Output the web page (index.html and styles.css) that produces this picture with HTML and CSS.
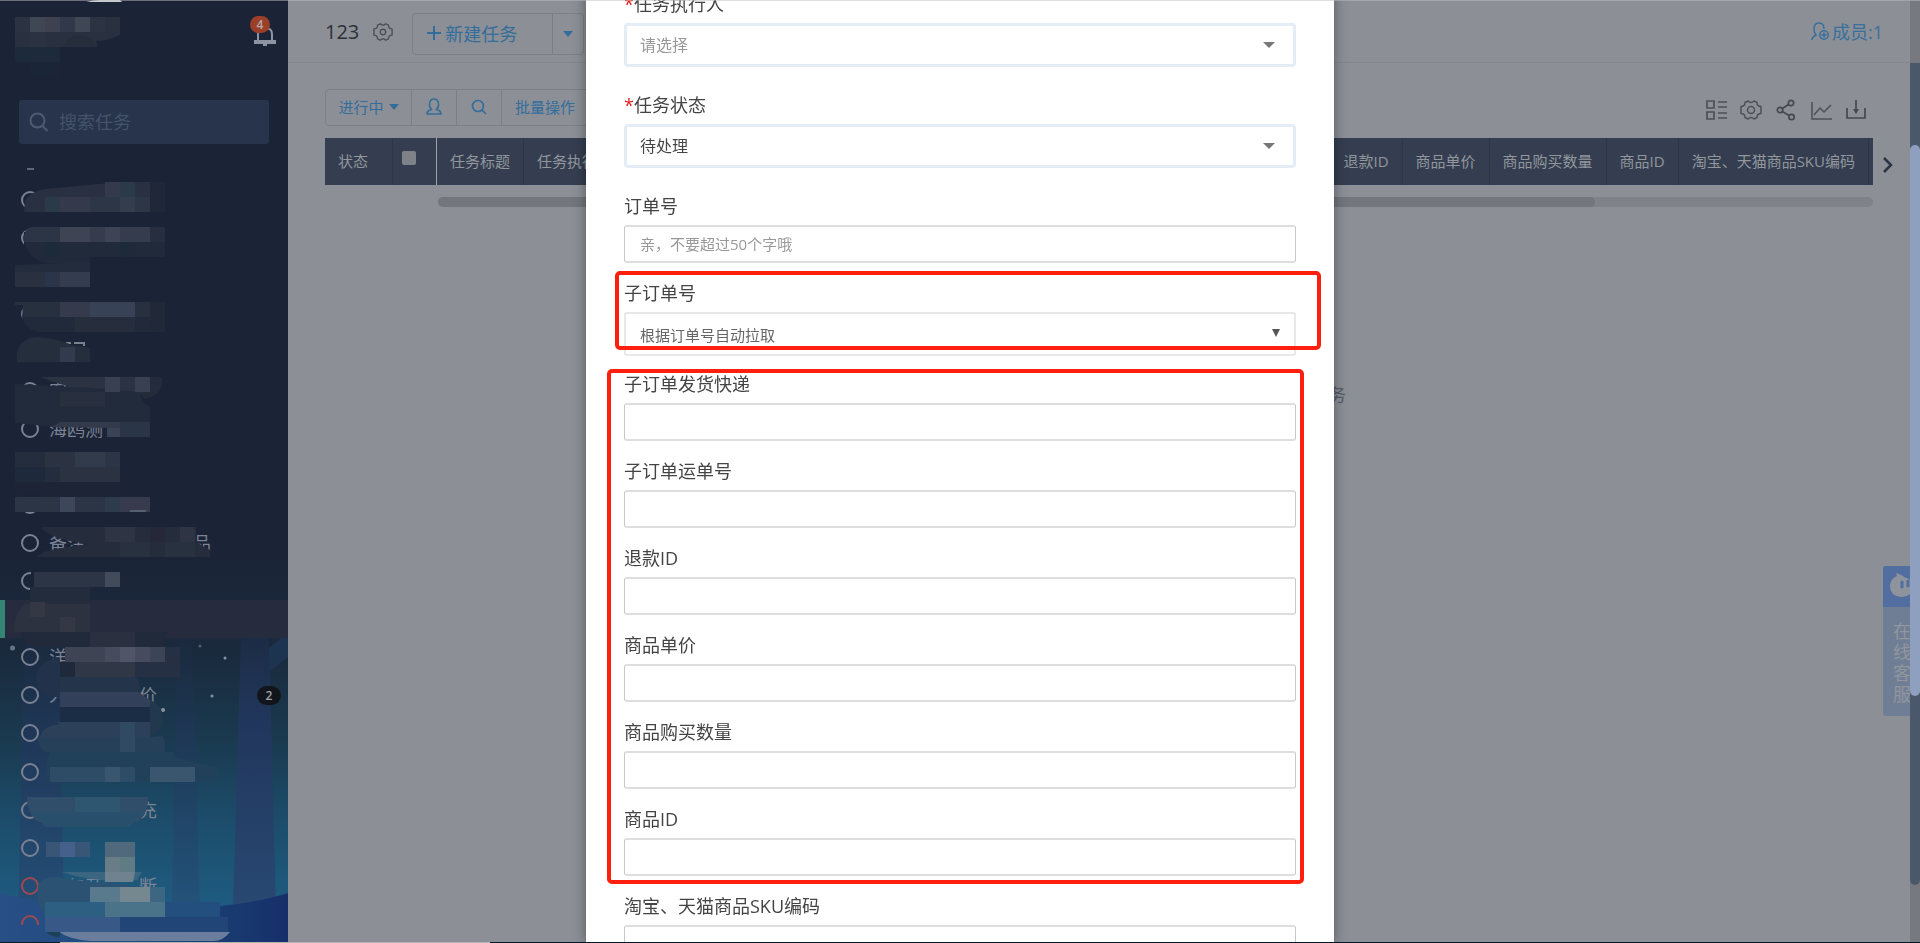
FILE: index.html
```html
<!DOCTYPE html>
<html lang="zh-CN">
  <head>
    <meta charset="UTF-8" />
    <meta name="viewport" content="width=device-width, initial-scale=1.0" />
    <title>任务列表</title>
    <link rel="stylesheet" href="styles.css">
  </head>
  <body>
    <aside class="sidebar">
      <svg class="sidebar-bg" viewBox="0 0 288 403" preserveAspectRatio="none" aria-hidden="true">
        <defs>
          <linearGradient id="sky" x1="0" y1="0" x2="0" y2="1">
            <stop offset="0" stop-color="#1b2336" />
            <stop offset="0.28" stop-color="#1a2a3d" />
            <stop offset="0.5" stop-color="#1a3a50" />
            <stop offset="0.7" stop-color="#1c4d6b" />
            <stop offset="0.9" stop-color="#1e5b80" />
          </linearGradient>
          <linearGradient id="tree" x1="0" y1="0" x2="0" y2="1">
            <stop offset="0" stop-color="#1c2b45" stop-opacity="0.3" />
            <stop offset="0.35" stop-color="#21355a" />
            <stop offset="1" stop-color="#284973" />
          </linearGradient>
          <linearGradient id="hill" x1="0" y1="0" x2="1" y2="0">
            <stop offset="0" stop-color="#284f86" />
            <stop offset="0.5" stop-color="#1d4a7c" />
            <stop offset="1" stop-color="#162f6a" />
          </linearGradient>
        </defs>
        <rect width="288" height="403" fill="url(#sky)" />
        <path fill="url(#tree)" d="M242 60h26l8 310h-43z" />
        <path fill="url(#tree)" opacity="0.5" d="M177 90h15l8 280h-28z" />
        <path fill="url(#tree)" opacity="0.7" d="M25 90h34l5 280H18z" />
        <path fill="#1c3450" d="M269 108l19-16v25l-19 15z" />
        <path fill="url(#hill)" d="M0 353q60 14 110 22t110-9q40-4 68-13v50H0z" />
        <g fill="#8a95a3">
          <circle cx="12.500" cy="108" r="2.500" opacity="0.7" />
          <circle cx="200" cy="106" r="1.500" opacity="0.5" />
          <circle cx="225" cy="118" r="1.500" />
          <circle cx="212" cy="156" r="1.500" />
          <circle cx="163" cy="170" r="2" />
        </g>
      </svg>

      <div class="sidebar-head">
        <button class="bell" aria-label="通知">
          <svg width="22" height="20" viewBox="0 0 22 20" fill="none" stroke="#8c93a1" stroke-width="2">
            <path d="M4 15V8q0-6 7-6t7 6v7" />
            <path d="M1 15h20v2H1zM9 19h4" />
          </svg>
          <span class="bell-count">4</span>
        </button>
      </div>

      <label class="search">
        <svg width="20" height="20" viewBox="0 0 20 20" fill="none" stroke="#4d5b72" stroke-width="2">
          <circle cx="8.500" cy="8.500" r="7" />
          <path d="M13.500 14l5 5" />
        </svg>
        <input type="text" placeholder="搜索任务" aria-label="搜索任务" />
      </label>

      <ul class="projects">
        <li><i class="dot"></i></li>
        <li><i class="dot"></i></li>
        <li></li>
        <li><i class="dot"></i></li>
        <li></li>
        <li><i class="dot"></i>客服</li>
        <li><i class="dot"></i>海鸥测</li>
        <li></li>
        <li><i class="dot"></i></li>
        <li><i class="dot"></i>备注　　　　　　品</li>
        <li><i class="dot"></i></li>
        <li class="active"></li>
        <li><i class="dot"></i>洋</li>
        <li><i class="dot"></i>人　　　　价<span class="count">2</span></li>
        <li><i class="dot"></i></li>
        <li><i class="dot"></i></li>
        <li><i class="dot"></i>　　　　　充</li>
        <li><i class="dot"></i></li>
        <li><i class="dot late"></i>　与开　　断</li>
        <li><i class="dot late"></i></li>
      </ul>

      <!-- censored names -->
      <svg class="mosaic" width="288" height="943" viewBox="0 0 288 943" aria-hidden="true">
        <path fill="#c9ccd0" d="M86 2q8-2 14-2h20l2 2z" />
        <g fill="none" stroke-width="15">
          <path stroke="#2b3242" d="M15 24.500h15M30 39.500h15" />
          <path stroke="#404754" d="M30 24.500h15M75 24.500h15" />
          <path stroke="#3e4150" d="M45 24.500h15" />
          <path stroke="#31384a" d="M60 24.500h15" />
          <path stroke="#2b3443" d="M90 24.500h15" />
          <path stroke="#29303f" d="M105 24.500h15M15 39.500h15M45 39.500h20" />
          <path stroke="#1c2a3b" d="M15 54.500h45" />
          <path stroke="#1b2538" d="M30 69.500h30" />
        </g>
        <path fill="#29303f" d="M60 32h60v3q-12 6-24 6l2 6H60z" />
        <path fill="#262d3b" d="M63 47q4-11 16-12 13 1 19 12z" />
        <path fill="#5d6675" d="M27 168h7v2h-7z" />

        <path fill="#1b2336" d="M25 196l12-4v20H25z" />
        <path fill="#283041" d="M25 201q6-10 20-12l75-7h30v30H24z" />
        <path fill="#1f2739" d="M150 182h15v30h-15z" />
        <g fill="none" stroke-width="15">
          <path stroke="#2b3a49" d="M45 204.500h15M120 189.500h15" />
          <path stroke="#343a4b" d="M60 204.500h30M105 189.500h15" />
          <path stroke="#2c3647" d="M90 204.500h30M135 204.500h15" />
          <path stroke="#323d4e" d="M120 204.500h15" />
        </g>
        <path fill="#1b2336" d="M24 232h20v25H24z" />
        <path fill="#202a3b" d="M24 242h141v15H90v6H45q-16-3-21-21z" />
        <path fill="#2b3545" d="M24 242q-1-14 8-15h28v15z" />
        <g fill="none" stroke-width="15">
          <path stroke="#3e4454" d="M60 234.500h30M105 234.500h15" />
          <path stroke="#343c4e" d="M90 234.500h15M120 234.500h30" />
          <path stroke="#272e3f" d="M150 234.500h15" />
          <path stroke="#1d2a3a" d="M45 249.500h15M120 249.500h15" />
          <path stroke="#29303f" d="M15 279.500h30" />
          <path stroke="#2a3549" d="M45 279.500h15" />
          <path stroke="#343d4f" d="M60 279.500h30" />
        </g>
        <path fill="#232c3c" d="M15 265l75-3v10H15z" />

        <path fill="#1b2336" d="M23 302h20v24H23z" />
        <path fill="#27303f" d="M15 302h135v15H22l1-12h-8z" />
        <path fill="#202a3a" d="M22 317h128v15H40q-15-2-18-15z" />
        <g fill="none" stroke-width="15">
          <path stroke="#353b4c" d="M60 309.500h30" />
          <path stroke="#384256" d="M90 309.500h45" />
          <path stroke="#262d3d" d="M75 324.500h60" />
          <path stroke="#212939" d="M150 309.500h15M150 324.500h15" />
        </g>
        <path fill="#7a818e" d="M66 342h5v2h-5zM74 342h11v4h-2v-2h-9z" />
        <path fill="#252e3d" d="M17 362v-8q3-17 22-17 20 2 33 8l18 3v14z" />
        <path stroke="#313b4d" stroke-width="15" d="M60 354.500h15" />

        <path fill="#1b2336" d="M51 389h110v13H21v-16h30z" />
        <path fill="#2b3242" d="M40 377h110v15H90q-26-6-50-15z" />
        <path fill="#242b3b" d="M150 377h12q2 18-17 22l-6-7h11z" />
        <path fill="#222b3b" d="M15 384l75 4 50 4q2 12 10 15v15H105l-50 5-40-4z" />
        <g fill="none" stroke-width="15">
          <path stroke="#384051" d="M105 384.500h15M135 384.500h15" />
          <path stroke="#28303f" d="M60 399.500h45" />
          <path stroke="#3a4355" d="M107 429.500h13" />
          <path stroke="#2a3548" d="M120 429.500h30" />
        </g>
        <path fill="#323a4b" d="M52 427l8-5h60v6z" />

        <g fill="none" stroke-width="15">
          <path stroke="#242d3d" d="M15 459.500h30M45 474.500h15" />
          <path stroke="#2b3343" d="M45 459.500h30M60 474.500h60" />
          <path stroke="#323b4c" d="M75 459.500h30" />
          <path stroke="#2c3545" d="M105 459.500h15" />
          <path stroke="#1e293b" d="M15 474.500h30" />
          <path stroke="#1d2435" d="M15 489.500h105" />
        </g>
        <path fill="#1b2336" d="M20 493h20v18H20z" />
        <g fill="none" stroke-width="15">
          <path stroke="#2b3545" d="M15 504.500h45M75 504.500h30" />
          <path stroke="#3d475a" d="M60 504.500h15" />
          <path stroke="#2d3c4c" d="M105 504.500h15" />
          <path stroke="#383b4d" d="M120 504.500h30" />
        </g>
        <path fill="#555f6e" d="M130 510h16v2h-16z" />

        <path fill="#252d3d" d="M41 527h155v15l14 8v7H36q6-8 54-13-40-4-49-17z" />
        <g fill="none" stroke-width="15">
          <path stroke="#2f3445" d="M105 534.500h30M180 534.500h15" />
          <path stroke="#28313f" d="M120 549.500h30M165 549.500h30" />
          <path stroke="#262738" d="M150 534.500h15" />
        </g>
        <path fill="#1b2336" d="M31 571h8v22h-8z" />
        <path fill="#222c3c" d="M30 587h60v15H30z" />
        <path fill="#2c3545" d="M34 572h71v15H34z" />
        <path stroke="#424b59" stroke-width="15" d="M105 579.500h15" />
        <path fill="#2d3241" d="M14 632q0-20 12-28h64v28z" />
        <path fill="#343744" d="M30 602h15v15H30zM60 617h15v15H60z" />

        <path fill="#212a3a" d="M20 632h148l-6 15H32q-8-4-12-15z" />
        <path fill="#2a303f" d="M90 632h45v15H90z" />
        <g fill="none" stroke-width="15">
          <path stroke="#3f4455" d="M65 654.500h40" />
          <path stroke="#464c5e" d="M105 654.500h15M135 654.500h15" />
          <path stroke="#505667" d="M120 654.500h15" />
          <path stroke="#3c4457" d="M150 654.500h15" />
          <path stroke="#263044" d="M165 654.500h15M135 669.500h45" />
          <path stroke="#303746" d="M75 669.500h60" />
          <path stroke="#1f293c" d="M60 669.500h15" />
        </g>
        <path fill="#22324a" d="M36 677q2-17 24-19v39H48q-12-6-12-20z" />
        <path fill="#24344a" d="M60 677h75q6 4 5 15H60z" />
        <path fill="#32405a" d="M60 692h78l12 8v7H60z" />
        <path fill="#1b2d44" d="M60 707h90v15H60z" />
        <path fill="#22384c" d="M150 700q13 5 13 20-2 13-13 17z" />
        <path fill="#2c4059" d="M40 737q4-12 20-13l-3-2h93v15z" />
        <path fill="#254058" d="M38 737h112l12-1q4 2 3 16H45q-8-6-7-15z" />
        <path fill="#2f4a62" d="M120 722h15v30h-15z" />
        <path fill="#21405a" d="M50 752h123l2 6 42 9v15h-22H53q-12-10-3-30z" />
        <g fill="none" stroke-width="15">
          <path stroke="#2f4c67" d="M50 774.500h55M120 774.500h15" />
          <path stroke="#3a566f" d="M105 774.500h15M150 774.500h45" />
        </g>
        <path fill="#304d69" d="M27 797h121q1 15-10 25H38q-12-10-11-25z" />
        <path fill="#2f5671" d="M75 797h45v15H75z" />
        <path fill="#28506d" d="M32 812h110l-12 15H45z" />
        <g fill="none" stroke-width="15">
          <path stroke="#3a5676" d="M46 849.500h14M75 849.500h15" />
          <path stroke="#45608a" d="M60 849.500h15" />
          <path stroke="#50697c" d="M105 849.500h30" />
          <path stroke="#6a7d86" d="M105 864.500h15" />
          <path stroke="#5f7b84" d="M120 864.500h15" />
        </g>
        <path fill="#3b6580" d="M62 872h80l-5 8q-18 4-35 0-24-2-40-8z" />
        <path fill="#708290" d="M105 872h30l-2 10h-28z" />
        <path fill="#2b5273" d="M38 902V886q4-9 17-9 40 6 110 12v28H45z" />
        <g fill="none" stroke-width="15">
          <path stroke="#587a8c" d="M90 894.500h30" />
          <path stroke="#76888f" d="M120 894.500h30" />
          <path stroke="#3d6683" d="M150 894.500h15" />
          <path stroke="#2d5f82" d="M45 909.500h60" />
          <path stroke="#4a7288" d="M105 909.500h60" />
          <path stroke="#234f7e" d="M165 909.500h55" />
          <path stroke="#385988" d="M45 924.500h75" />
          <path stroke="#224578" d="M120 924.500h108" />
        </g>
        <path fill="#274e84" d="M20 925h24v11H20z" />
        <path fill="#6a7d9d" d="M60 932h170q-7 9-16 9H90q-22-2-30-9z" />
        <path fill="#1c4058" d="M46 932h14v5q-8 0-14-5z" />
      </svg>
    </aside>

    <main class="main">
      <header class="topbar">
        <h1>123</h1>
        <button class="icon-btn gear" aria-label="设置">
          <svg width="20" height="20" viewBox="0 0 22 22" fill="none" stroke="#4c5057" stroke-width="1.500" stroke-linejoin="round">
            <path d="M8 2q3 3 6 0l3 1.500q0 4 4 4v7q-4 0-4 4L14 20q-3-3-6 0l-3-1.500q0-4-4-4v-7q4 0 4-4z" />
            <circle cx="11" cy="11" r="3" />
          </svg>
        </button>
        <div class="btn-group create">
          <button class="btn-new">
            <svg width="14" height="14" viewBox="0 0 14 14" stroke="#336d9b" stroke-width="2"><path d="M7 0v14M0 7h14" /></svg>
            新建任务
          </button>
          <button class="btn-more" aria-label="更多"><i class="caret"></i></button>
        </div>
        <a class="members" href="#">
          <svg width="18" height="19" viewBox="0 0 18 19" fill="none" stroke="#36709d" stroke-width="1.500">
            <path d="M1 18q0-3 4-5-2-2-2-6 0-6 5-6t5 6" />
            <circle cx="13" cy="13" r="4.200" />
            <path d="M13 10.500v5M10.500 13h5" />
          </svg>
          成员:1
        </a>
      </header>

      <section class="content">
        <div class="toolbar">
          <div class="btn-group">
            <button class="filter-status">进行中<i class="caret"></i></button>
            <button class="filter-icon" aria-label="成员">
              <svg width="16" height="18" viewBox="0 0 16 18" fill="none" stroke="#336d9b" stroke-width="1.500">
                <path d="M5.500 11.500Q3 9 3.500 5.500 4 1 8 1t4.500 4.500q.5 3.500-2 6 4 1 4.500 3.500v1H1v-1q.5-2.500 4.500-3.500z" />
              </svg>
            </button>
            <button class="filter-icon" aria-label="搜索">
              <svg width="16" height="16" viewBox="0 0 16 16" fill="none" stroke="#336d9b" stroke-width="1.700">
                <circle cx="7" cy="7" r="5.500" />
                <path d="M11 11l4 4" />
              </svg>
            </button>
            <button class="filter-batch">批量操作</button>
          </div>
          <div class="tools">
            <button class="icon-btn" aria-label="列表">
              <svg width="22" height="22" viewBox="0 0 22 22" fill="none" stroke="#4c5057" stroke-width="1.700">
                <path d="M2 2h7v7H2zM2 13h7v7H2zM13 3h9M13 8h9M13 14h9M13 19h9" />
              </svg>
            </button>
            <button class="icon-btn" aria-label="设置">
              <svg width="22" height="22" viewBox="0 0 22 22" fill="none" stroke="#4c5057" stroke-width="1.500" stroke-linejoin="round">
                <path d="M8 2q3 3 6 0l3 1.500q0 4 4 4v7q-4 0-4 4L14 20q-3-3-6 0l-3-1.500q0-4-4-4v-7q4 0 4-4z" />
                <circle cx="11" cy="11" r="3.500" />
              </svg>
            </button>
            <button class="icon-btn" aria-label="分享">
              <svg width="22" height="22" viewBox="0 0 22 22" fill="none" stroke="#45494f" stroke-width="1.700">
                <circle cx="16" cy="4" r="2.700" />
                <circle cx="5" cy="11" r="2.700" />
                <circle cx="16.500" cy="18" r="2.700" />
                <path d="M13.600 5.500L7.300 9.500M7.300 12.500l6.800 4" />
              </svg>
            </button>
            <button class="icon-btn" aria-label="统计">
              <svg width="22" height="22" viewBox="0 0 22 22" fill="none" stroke="#4c5057" stroke-width="1.500">
                <path d="M2 3v17h20M4 16l6-7 4 4 7-7" />
              </svg>
            </button>
            <button class="icon-btn" aria-label="导出">
              <svg width="22" height="22" viewBox="0 0 22 22" fill="none" stroke="#45494f" stroke-width="1.700">
                <path d="M2 9v10h18V9M11 1v13" />
                <path d="M8 10h6l-3 5z" fill="#45494f" stroke="none" />
              </svg>
            </button>
          </div>
        </div>

        <div class="table-row">
          <table class="tasks">
            <thead>
              <tr>
                <th class="col-state">状态</th>
                <th class="col-check"><input type="checkbox" aria-label="全选" /></th>
                <th>任务标题</th>
                <th>任务执行人</th>
                <td class="col-rest"></td>
                <th>退款ID</th>
                <th>商品单价</th>
                <th>商品购买数量</th>
                <th>商品ID</th>
                <th>淘宝、天猫商品SKU编码</th>
                <td class="col-end"></td>
              </tr>
            </thead>
          </table>
          <button class="next" aria-label="下一页">
            <svg width="12" height="18" viewBox="0 0 12 18" fill="none" stroke="#2c3444" stroke-width="2.500"><path d="M2 2l7 7-7 7" /></svg>
          </button>
        </div>
        <div class="hscroll"><div class="hscroll-thumb"></div></div>
        <p class="empty">暂无任务</p>
      </section>
    </main>

    <div class="service">
      <div class="service-head">
        <svg width="30" height="26" viewBox="0 0 30 26">
          <path fill="#8f949c" d="M9 4L8 1q6 2 8 4 9 2 9 10 0 9-12 10Q2 24 2 14 2 7 9 4z" />
          <path stroke="#526da0" stroke-width="3" stroke-linecap="round" d="M14 10v5M20 9v5" />
        </svg>
      </div>
      <p>在线客服</p>
    </div>

    <div class="scrollbar"><div class="scrollbar-track"><div class="scrollbar-thumb"></div></div></div>

    <div class="modal-wrap">
      <form class="modal" role="dialog" aria-label="新建任务">
        <div class="field field-pick">
          <label for="owner"><span class="required">*</span>任务执行人</label>
          <div class="select-box">
            <select id="owner" class="select empty-value"><option>请选择</option></select>
          </div>
        </div>
        <div class="field field-pick">
          <label for="state"><span class="required">*</span>任务状态</label>
          <div class="select-box">
            <select id="state" class="select"><option>待处理</option></select>
          </div>
        </div>
        <div class="field">
          <label for="order">订单号</label>
          <input id="order" type="text" placeholder="亲，不要超过50个字哦" />
        </div>
        <div class="field field-sub">
          <label for="suborder">子订单号</label>
          <div class="select-box">
            <select id="suborder" class="select plain"><option>根据订单号自动拉取</option></select>
          </div>
          <div class="mark mark-sub"></div>
        </div>
        <div class="auto-fields">
          <div class="field">
            <label for="express">子订单发货快递</label>
            <input id="express" type="text" />
          </div>
          <div class="field">
            <label for="waybill">子订单运单号</label>
            <input id="waybill" type="text" />
          </div>
          <div class="field">
            <label for="refund">退款ID</label>
            <input id="refund" type="text" />
          </div>
          <div class="field">
            <label for="price">商品单价</label>
            <input id="price" type="text" />
          </div>
          <div class="field">
            <label for="amount">商品购买数量</label>
            <input id="amount" type="text" />
          </div>
          <div class="field">
            <label for="goods">商品ID</label>
            <input id="goods" type="text" />
          </div>
          <div class="mark mark-auto"></div>
        </div>
        <div class="field">
          <label for="sku">淘宝、天猫商品SKU编码</label>
          <input id="sku" type="text" />
        </div>
      </form>
    </div>

    <div class="edge-top"></div>
    <div class="edge-bottom"></div>
  </body>
</html>
```
FILE: styles.css
```css
* {
  margin: 0;
  padding: 0;
  box-sizing: border-box;
}

body {
  display: flex;
  min-height: 100vh;
  overflow: hidden;
  background: #8c8f96;
  color: #333;
  font-family: 'Open Sans', 'Noto Sans CJK SC', sans-serif;
  font-size: 15px;
}

button,
input,
select {
  font: inherit;
  color: inherit;
  outline: none;
}

button {
  border: none;
  background: none;
  cursor: pointer;
}

svg {
  display: block;
  flex: none;
}

/* sidebar */
.sidebar {
  position: relative;
  z-index: 0;
  display: flex;
  flex-direction: column;
  flex: none;
  width: 288px;
  height: 100vh;
  overflow: hidden;
  background: #1b2336;
  color: #7a8294;
}

.sidebar-bg {
  position: absolute;
  left: 0;
  bottom: 0;
  z-index: -1;
  width: 100%;
  height: 403px;
}

.sidebar-head {
  display: flex;
  justify-content: flex-end;
  height: 100px;
  padding: 26px 12px 0 0;
}

.bell {
  position: relative;
  height: 20px;
}

.bell-count {
  position: absolute;
  top: -10px;
  left: -4px;
  width: 20px;
  border-radius: 9px;
  background: #9b3f29;
  color: #b3a9a8;
  font-size: 12px;
  font-weight: 600;
  line-height: 17px;
}

.search {
  display: flex;
  align-items: center;
  gap: 10px;
  height: 44px;
  margin: 0 19px;
  padding: 0 10px;
  border-radius: 3px;
  background: #28344b;
}

.search input {
  width: 100%;
  border: none;
  background: none;
  font-size: 18px;
}

.search input::placeholder {
  color: #44526a;
}

.projects {
  display: grid;
  grid-auto-rows: 1fr;
  flex: 1;
  padding-top: 37px;
  list-style: none;
  font-size: 18px;
  line-height: 24px;
}

.projects li {
  display: flex;
  align-items: center;
  gap: 10px;
  padding: 0 7px 0 21px;
  white-space: pre;
}

.projects .active {
  border-left: 5px solid #348573;
  background: #262c3e;
}

.dot {
  flex: none;
  width: 18px;
  height: 18px;
  border: 2px solid #7a8294;
  border-radius: 50%;
}

.dot.late {
  border-color: #9c4a50;
}

.count {
  width: 24px;
  margin-left: auto;
  border-radius: 10px;
  background: #12151c;
  color: #a0a3a8;
  font-size: 12px;
  font-weight: 600;
  line-height: 19px;
  text-align: center;
}

.mosaic {
  position: absolute;
  top: 0;
  left: 0;
  pointer-events: none;
}

/* main area */
.main {
  flex: 1;
  min-width: 0;
  padding-right: 10px;
}

.topbar {
  display: flex;
  align-items: center;
  height: 63px;
  padding: 6px 27px 0 37px;
  border-bottom: 1px solid #83868d;
}

.topbar h1 {
  margin-bottom: 6px;
  color: #2c3036;
  font-size: 20px;
  font-weight: 400;
}

.icon-btn {
  display: flex;
}

.gear {
  margin: 0 19px 4px 14px;
}

.btn-group {
  display: flex;
  border: 1px solid #7b7f87;
  border-radius: 4px;
  color: #336d9b;
}

.btn-group button {
  display: flex;
  align-items: center;
  justify-content: center;
}

.btn-group button + button {
  border-left: 1px solid #7b7f87;
}

.create {
  height: 42px;
  font-size: 18px;
}

.create .btn-new {
  justify-content: flex-start;
  gap: 4px;
  width: 139px;
  padding: 0 0 2px 14px;
}

.btn-more {
  width: 31px;
}

.caret {
  border: 5px solid transparent;
  border-top: 6px solid #336d9b;
  border-bottom: none;
}

.members {
  display: flex;
  align-items: center;
  gap: 3px;
  margin: 0 0 6px auto;
  color: #36709d;
  font-size: 18px;
  text-decoration: none;
}

.content {
  padding: 26px 0 0 37px;
}

.toolbar {
  display: flex;
  justify-content: space-between;
  height: 37px;
  padding-right: 37px;
}

.toolbar .btn-group button {
  padding-bottom: 2px;
}

.filter-status {
  gap: 5px;
  width: 85px;
}

.filter-icon {
  width: 45px;
}

.filter-batch {
  width: 87px;
}

.tools {
  display: flex;
  align-items: center;
  gap: 13px;
  padding: 4px 6px 0 0;
}

.table-row {
  display: flex;
  margin-top: 12px;
}

.tasks {
  flex: 1;
  height: 47px;
  border-collapse: collapse;
  background: #343e50;
  color: #92969d;
}

.tasks th {
  padding: 0 13px 3px;
  border-right: 1px solid #2d3647;
  font-weight: 400;
  text-align: left;
  white-space: nowrap;
}

.tasks .col-state {
  padding-right: 24px;
}

.tasks .col-check {
  padding: 0 20px 8px 9px;
  border-right: 1px solid #a0a3a8;
}

.col-check input {
  display: block;
  width: 14px;
  height: 14px;
  border-radius: 2px;
  background: #7f8288;
  appearance: none;
}

.col-rest {
  width: 100%;
}

.col-end {
  padding-left: 4px;
}

.next {
  display: flex;
  align-items: center;
  width: 37px;
  padding: 7px 0 0 9px;
}

.hscroll {
  margin: 12px 37px 0 113px;
  border-radius: 5px;
  background: #7f8289;
}

.hscroll-thumb {
  width: 80.6%;
  height: 10px;
  border-radius: 5px;
  background: #73767d;
}

.empty {
  margin-top: 176px;
  padding-right: 564px;
  color: #555d6a;
  font-size: 18px;
  line-height: 24px;
  text-align: right;
}

/* online service tab */
.service {
  position: fixed;
  top: 566px;
  right: 0;
  width: 37px;
  border-radius: 3px 0 0 3px;
  overflow: hidden;
  background: #707e95;
}

.service-head {
  height: 41px;
  padding: 6px 5px;
  background: #526da0;
}

.service p {
  width: 28px;
  padding: 14px 0 11px 10px;
  color: #92969d;
  font-size: 18px;
  line-height: 21px;
}

.scrollbar {
  position: fixed;
  top: 0;
  right: 0;
  bottom: 0;
  width: 10px;
  padding: 63px 0 58px;
  background: #77797e;
}

.scrollbar-track {
  height: 100%;
  padding-top: 82px;
  border-radius: 0 0 5px 5px;
  background: #4b586b;
}

.scrollbar-thumb {
  height: 74.4%;
  border-radius: 5px;
  background: #8f9fc0;
}

/* dialog */
.modal-wrap {
  position: fixed;
  top: 0;
  right: 0;
  bottom: 0;
  left: 0;
  display: flex;
  justify-content: center;
  overflow: hidden;
}

.modal {
  flex: none;
  width: 748px;
  max-width: 100%;
  margin-top: -8px;
  padding: 0 38px;
  background: #fff;
  box-shadow: 0 0 12px rgba(0, 0, 0, 0.4);
}

.field {
  position: relative;
  margin-bottom: 18px;
}

.field-pick {
  margin-bottom: 26px;
}

.field-sub {
  margin-bottom: 16px;
}

.field label {
  display: block;
  margin-bottom: 7px;
  color: #444;
  font-size: 18px;
  line-height: 24px;
}

.required {
  color: #e02020;
}

.field input {
  display: block;
  width: 100%;
  height: 38px;
  padding: 0 15px;
  border: 1px solid #c8c8c8;
  border-width: 2px 1px;
  border-color: #dedede #c8c8c8;
  border-radius: 3px;
}

.field input::placeholder {
  color: #999;
}

.select-box {
  position: relative;
}

.select-box::after {
  content: '';
  position: absolute;
  top: 19px;
  right: 21px;
  border: 6px solid transparent;
  border-top-color: #777;
  border-bottom: none;
  pointer-events: none;
}

.field-sub .select-box::after {
  top: 17px;
  right: 16px;
  border-width: 8px 4px 0;
  border-top-color: #555;
}

.select {
  display: block;
  width: 100%;
  height: 44px;
  padding: 0 13px;
  border: 3px solid #e4edf5;
  border-radius: 4px;
  background: #fff;
  color: #444;
  font-size: 16px;
  appearance: none;
}

.select.empty-value {
  color: #999;
}

.select.plain {
  padding: 2px 14px 0;
  border: 2px solid #e8e8e8;
  border-radius: 3px;
  color: #666;
  font-size: 15px;
}

.auto-fields {
  position: relative;
}

/* red marker frames */
.mark {
  position: absolute;
  border: 4px solid #ff1f0f;
  border-radius: 5px;
  pointer-events: none;
}

.mark-sub {
  top: -10px;
  right: -25px;
  bottom: 6px;
  left: -9px;
}

.mark-auto {
  top: -3px;
  right: -8px;
  bottom: -8px;
  left: -17px;
}

.edge-top,
.edge-bottom {
  position: fixed;
  right: 0;
  left: 0;
  height: 1px;
}

.edge-top {
  top: 0;
  background: rgba(190, 190, 190, 0.5);
}

.edge-bottom {
  bottom: 0;
  background: linear-gradient(90deg, #0b1c2a 60px, #b5b5b5 60px, #b5b5b5 490px, #001a2a 490px);
}
```
